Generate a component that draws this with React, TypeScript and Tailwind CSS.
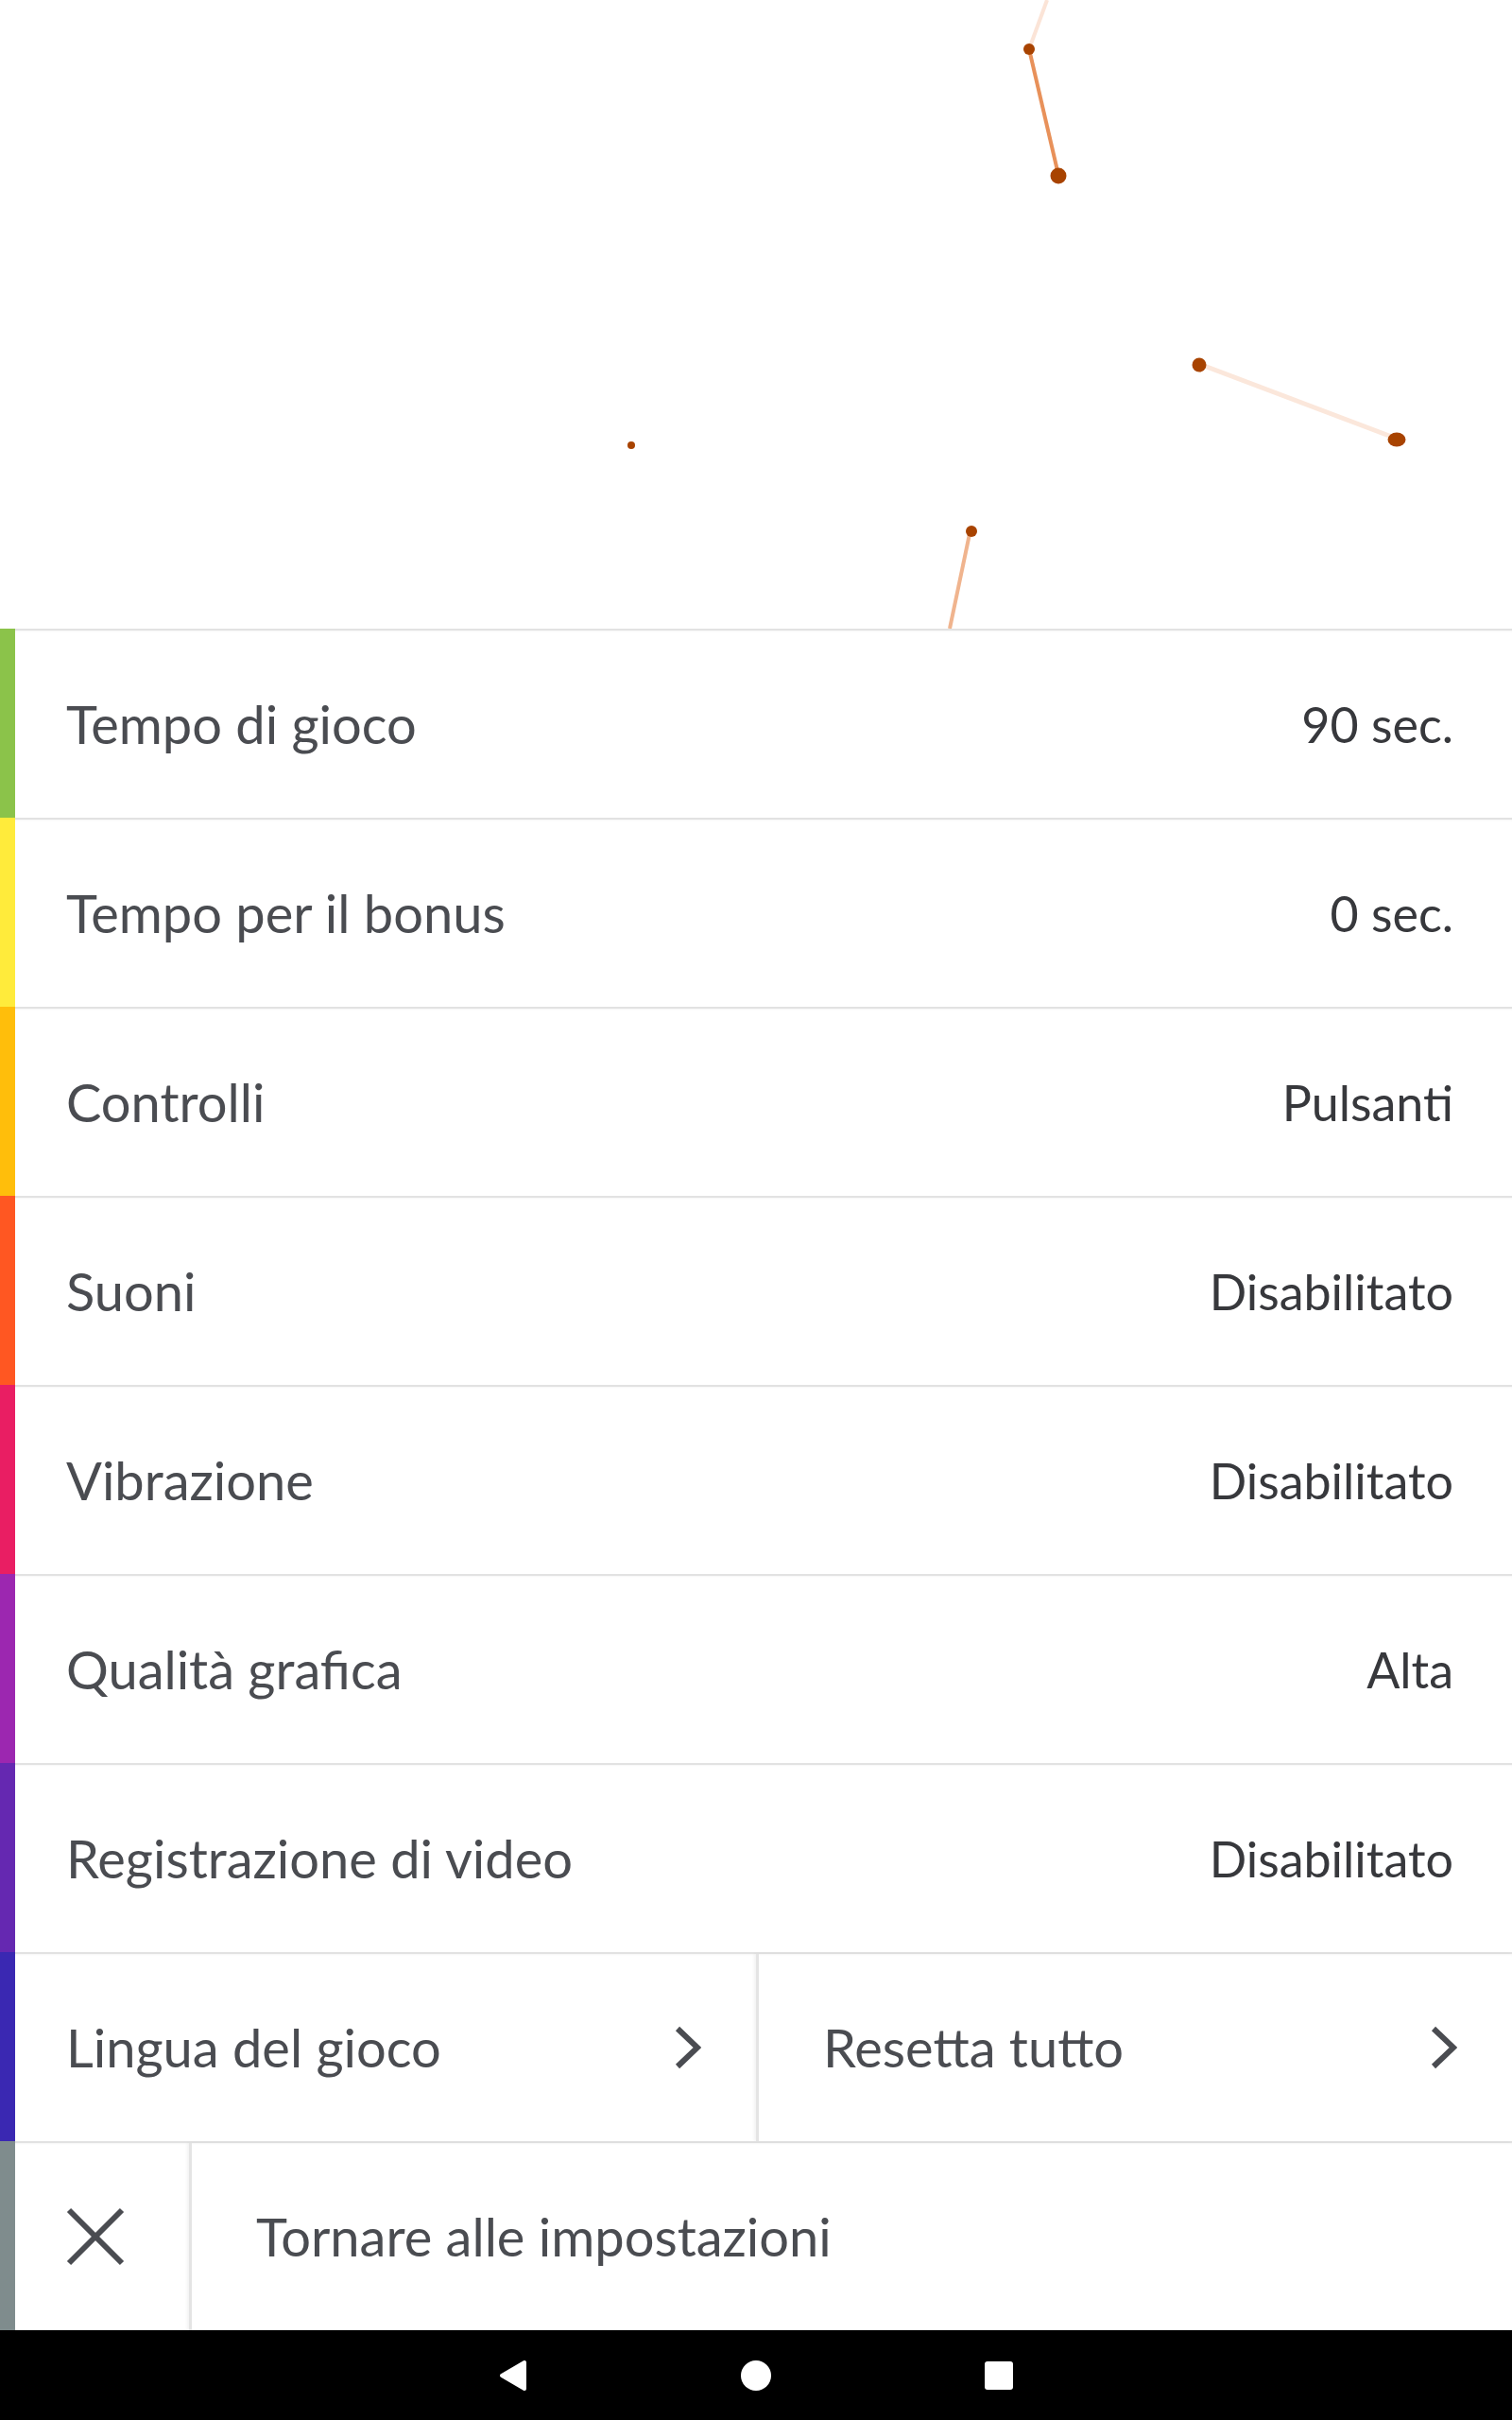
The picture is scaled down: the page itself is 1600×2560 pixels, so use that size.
import React from 'react';

const rows = [
  { label: 'Tempo di gioco', value: '90 sec.', bar: 'bg-[#8bc34a]' },
  { label: 'Tempo per il bonus', value: '0 sec.', bar: 'bg-[#ffeb3b]' },
  { label: 'Controlli', value: 'Pulsanti', bar: 'bg-[#ffbe0b]' },
  { label: 'Suoni', value: 'Disabilitato', bar: 'bg-[#ff5722]' },
  { label: 'Vibrazione', value: 'Disabilitato', bar: 'bg-[#e91e63]' },
  { label: 'Qualità grafica', value: 'Alta', bar: 'bg-[#9c27b0]' },
  { label: 'Registrazione di video', value: 'Disabilitato', bar: 'bg-[#6528b1]' },
];

function Chevron() {
  return (
    <svg width="28" height="46" viewBox="0 0 28 46" className="shrink-0">
      <polyline points="3,3 24,23 3,43" fill="none" stroke="#4a4c51" strokeWidth="6" />
    </svg>
  );
}

function Constellation() {
  const dot = '#a84300';
  return (
    <svg width="1600" height="665" viewBox="0 0 1600 665" className="block">
      <line x1="1108" y1="0" x2="1089" y2="52" stroke="#fbe4d7" strokeWidth="4" />
      <line x1="1089" y1="52" x2="1120" y2="185" stroke="#e8915a" strokeWidth="4" />
      <line x1="1269" y1="385" x2="1478" y2="464" stroke="#fbe7db" strokeWidth="5" />
      <line x1="1027" y1="560" x2="1005" y2="665" stroke="#f0b48e" strokeWidth="4" />
      <circle cx="1089" cy="52" r="6" fill={dot} />
      <circle cx="1120" cy="186" r="8.5" fill={dot} />
      <circle cx="1269" cy="386" r="7.5" fill={dot} />
      <ellipse cx="1478" cy="465" rx="9.5" ry="7.5" fill={dot} />
      <circle cx="668" cy="471" r="4" fill={dot} />
      <circle cx="1028" cy="562" r="6" fill={dot} />
    </svg>
  );
}

export default function App() {
  return (
    <div className="w-[1600px] h-[2560px] bg-white flex flex-col font-['Lato',sans-serif] overflow-hidden">
      <Constellation />

      {rows.map((r) => (
        <div key={r.label} className="flex h-[200px] shrink-0">
          <div className={`w-4 ${r.bar}`} />
          <div className="flex-1 flex items-center justify-between bg-white border-t-2 border-[#e2e2e2] shadow-[inset_0_2px_2px_-1px_rgba(0,0,0,0.04)] pl-[54px] pr-[62px]">
            <span className="text-[56px] text-[#4a4c51] leading-none">{r.label}</span>
            <span className="text-[52px] text-[#37383c] leading-none">{r.value}</span>
          </div>
        </div>
      ))}

      <div className="flex h-[200px] shrink-0">
        <div className="w-4 bg-[#3a28b2]" />
        <div className="flex-1 flex bg-white border-t-2 border-[#e2e2e2] shadow-[inset_0_2px_2px_-1px_rgba(0,0,0,0.04)]">
          <div className="w-[784px] flex items-center justify-between pl-[54px] pr-[58px]">
            <span className="text-[56px] text-[#4a4c51] leading-none">Lingua del gioco</span>
            <Chevron />
          </div>
          <div className="flex-1 flex items-center justify-between border-l-[3px] border-[#e4e4e4] shadow-[-2px_0_3px_rgba(0,0,0,0.05)] pl-[68px] pr-[58px]">
            <span className="text-[56px] text-[#4a4c51] leading-none">Resetta tutto</span>
            <Chevron />
          </div>
        </div>
      </div>

      <div className="flex h-[200px] shrink-0">
        <div className="w-4 bg-[#7f8c8d]" />
        <div className="flex-1 flex bg-white border-t-2 border-[#e2e2e2] shadow-[inset_0_2px_2px_-1px_rgba(0,0,0,0.04)]">
          <div className="w-[184px] flex items-center pl-[54px]">
            <svg width="62" height="62" viewBox="0 0 62 62">
              <line x1="3" y1="3" x2="59" y2="59" stroke="#4a4c51" strokeWidth="6" />
              <line x1="59" y1="3" x2="3" y2="59" stroke="#4a4c51" strokeWidth="6" />
            </svg>
          </div>
          <div className="flex-1 flex items-center border-l-[3px] border-[#e4e4e4] shadow-[-2px_0_3px_rgba(0,0,0,0.05)] pl-[68px]">
            <span className="text-[56px] text-[#4a4c51] leading-none">Tornare alle impostazioni</span>
          </div>
        </div>
      </div>

      <div className="flex-1 bg-black flex items-center justify-center gap-[226px]">
        <svg width="30" height="34" viewBox="0 0 30 34">
          <path d="M27 3 L27 31 L3 17 Z" fill="#ffffff" stroke="#ffffff" strokeWidth="4" strokeLinejoin="round" />
        </svg>
        <div className="w-8 h-8 rounded-full bg-white" />
        <div className="w-[30px] h-[30px] rounded-[3px] bg-white" />
      </div>
    </div>
  );
}
